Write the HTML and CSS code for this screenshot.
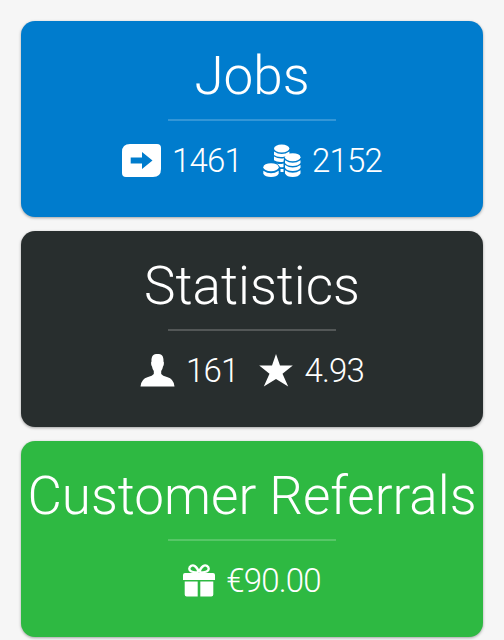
FILE: index.html
```
<!DOCTYPE html>
<html lang="en">
<head>
    <meta charset="UTF-8">
    <meta name="viewport" content="width=device-width, initial-scale=1.0">
    <title>Dashboard</title>
    <link rel="stylesheet" href="styles.css">
</head>
<body>
    <div class="card jobs">
        <h2>Jobs</h2>
        <hr>
        <div class="stats">
            <div class="stat">
                <svg class="icon" width="39" height="34" viewBox="0 0 39 34">
                    <path fill-rule="evenodd" d="M8 0H35Q39 0 39 4V25Q39 33 31 33H4Q0 33 0 29V8Q0 0 8 0ZM8.700 13.500V19.500H20V25L30.500 16.500L20 8V13.500Z"/>
                </svg>
                <span>1461</span>
            </div>
            <div class="stat">
                <svg class="icon" width="38" height="34" viewBox="0 0 38 34">
                    <ellipse cx="18.700" cy="4.500" rx="7.700" ry="4"/>
                    <path d="M11 7.500Q18.700 12.500 26.400 7.500V10Q24 11 22 12.500Q15 14 11 11Z"/>
                    <path d="M11 12.500Q15.500 15.300 21 14.300L20.500 17.800Q14.500 18.800 11 16.300Z"/>
                    <path d="M13.500 19.500Q17 20.500 20.500 19.500V23Q18.500 23.500 17 23Q16 20.800 13.500 19.500ZM17.500 25H20.500V28H17.500Z"/>
                    <ellipse cx="29.700" cy="13.200" rx="7.800" ry="4"/>
                    <path d="M22 16.200Q29.700 21.200 37.500 16.200V19Q35.500 22 29.700 22T22 19Z"/>
                    <path d="M22 21Q29.700 26 37.500 21V23.800Q35.500 27 29.700 27T22 23.800Z"/>
                    <path d="M22 26.200Q29.700 31.200 37.500 26.200V29.500Q35.500 33 29.700 33T22 29.500Z"/>
                    <ellipse cx="8" cy="23.200" rx="7.700" ry="4"/>
                    <path d="M.300 26.700Q8 31.700 15.700 26.700V29.700Q13.800 33 8 33T.300 29.700Z"/>
                </svg>
                <span>2152</span>
            </div>
        </div>
    </div>

    <div class="card statistics">
        <h2>Statistics</h2>
        <hr>
        <div class="stats">
            <div class="stat">
                <svg class="icon" width="35" height="34" viewBox="0 0 35 34">
                    <path d="M17.500 0C21.500 0 23.800 1.800 23.500 7.500Q24.200 8 23.800 10.500Q23.500 12 23 12.500Q22.500 15.500 21.200 17V20Q22.500 21.800 27 23Q34 25 34.500 32.500H.500Q1 25 8 23Q12.500 21.800 13.800 20V17Q12.500 15.500 12 12.500Q11.500 12 11.200 10.500Q10.800 8 11.500 7.500C11.200 1.800 13.500 0 17.500 0Z"/>
                </svg>
                <span>161</span>
            </div>
            <div class="stat">
                <svg class="icon" width="34" height="34" viewBox="0 0 34 34">
                    <path d="M17 0L21 11.500H33.800L23.500 19.700L29.200 32.500L17 25L4.800 32.500L10.500 19.700L.200 11.500H13Z"/>
                </svg>
                <span>4.93</span>
            </div>
        </div>
    </div>

    <div class="card referrals">
        <h2>Customer Referrals</h2>
        <hr>
        <div class="stats">
            <div class="stat">
                <svg class="icon" width="32" height="34" viewBox="0 0 32 34">
                    <g class="bow">
                        <path d="M15.500 8.500C12 8.500 6.500 8.500 6.300 5C6.200 2 9.500 .500 11.700 2C14 3.500 15.300 6 16 8.500"/>
                        <path d="M16.500 8.500C20 8.500 25.500 8.500 25.700 5C25.800 2 22.500 .500 20.300 2C18 3.500 16.700 6 16 8.500"/>
                    </g>
                    <path d="M2 9H14.700V16H0V11Q0 9 2 9ZM17.300 9H30Q32 9 32 11V16H17.300ZM1.700 17.500H14.700V32.500H3.700Q1.700 32.500 1.700 30.500ZM17.300 17.500H30.300V30.500Q30.300 32.500 28.300 32.500H17.300Z"/>
                    <path d="M14 9H18V16H14Z"/>
                </svg>
                <span>€90.00</span>
            </div>
        </div>
    </div>
</body>
</html>
```

FILE: styles.css
```
body {
    margin: 0;
    padding: 21px;
    height: 640px;
    box-sizing: border-box;
    overflow: hidden;
    background-color: #f6f6f6;
    font-family: Roboto, "Liberation Sans", sans-serif;
    font-weight: 300;
    color: #fff;
}
.card {
    height: 196px;
    margin-bottom: 14px;
    padding-top: 23px;
    box-sizing: border-box;
    border-radius: 14px;
    box-shadow: 0 1px 3px rgba(0, 0, 0, 0.35);
}
.jobs {
    background-color: #007ccd;
}
.statistics {
    background-color: #282e2e;
}
.referrals {
    background-color: #2eb942;
}
h2 {
    margin: 0;
    font-size: 53px;
    font-weight: 300;
    line-height: 64px;
    text-align: center;
    white-space: nowrap;
}
hr {
    width: 168px;
    height: 2px;
    margin: 11px auto 20px;
    border: 0;
    background-color: rgba(255, 255, 255, 0.2);
}
.stats {
    display: flex;
    justify-content: center;
    gap: 21px;
}
.stat {
    display: flex;
    align-items: center;
    gap: 11px;
    height: 40px;
    font-size: 33px;
    line-height: 40px;
    letter-spacing: -0.8px;
}
.icon {
    fill: #fff;
}
.bow {
    fill: none;
    stroke: #fff;
    stroke-width: 2.4;
}
```
